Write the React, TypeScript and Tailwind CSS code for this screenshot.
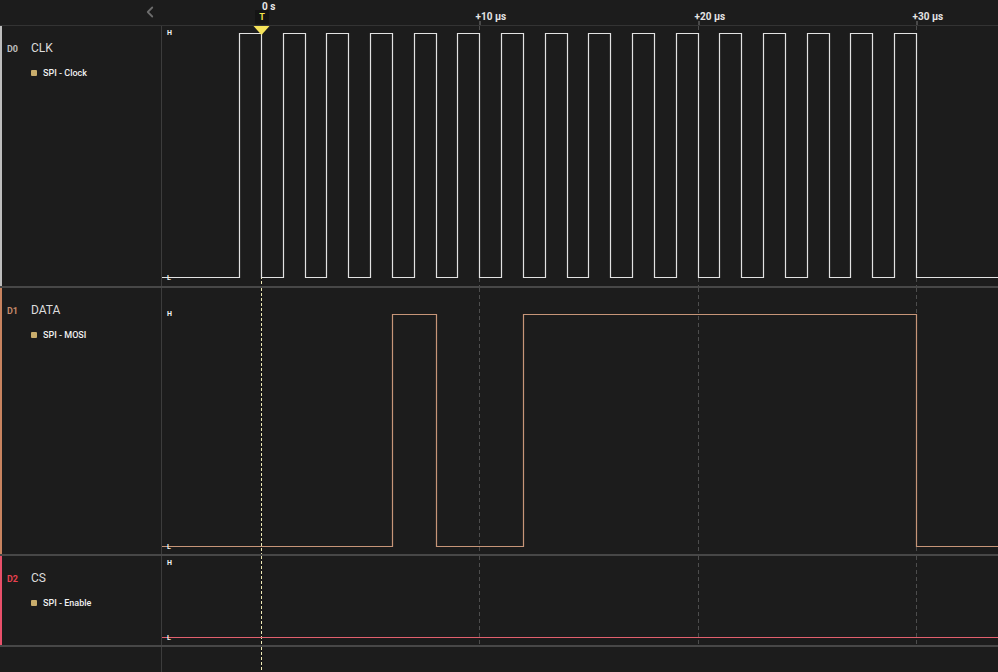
import React from "react";
import { ChevronLeft } from "lucide-react";

const X = (t: number) => Math.round(99 + t * 21.83) + 0.5;
const W = 836;

function clkPath(H: number, L: number) {
  let d = `M 0 ${L}`;
  for (let k = 0; k < 16; k++) {
    const r = X(-1 + 2 * k);
    const f = X(2 * k);
    d += ` L ${r} ${L} L ${r} ${H} L ${f} ${H} L ${f} ${L}`;
  }
  d += ` L ${W} ${L}`;
  return d;
}

function dataPath(H: number, L: number) {
  const segs: [number, number][] = [
    [6, 8],
    [12, 30],
  ];
  let d = `M 0 ${L}`;
  for (const [a, b] of segs) {
    d += ` L ${X(a)} ${L} L ${X(a)} ${H} L ${X(b)} ${H} L ${X(b)} ${L}`;
  }
  d += ` L ${W} ${L}`;
  return d;
}

function Grid({ h, grid = true }: { h: number; grid?: boolean }) {
  return (
    <>
      {grid &&
        [10, 20, 30].map((t) => (
          <line
            key={t}
            x1={X(t)}
            x2={X(t)}
            y1={0}
            y2={h}
            stroke="#4d4d4d"
            strokeWidth={1}
            strokeDasharray="4 3"
          />
        ))}
      <line
        x1={X(0)}
        x2={X(0)}
        y1={0}
        y2={h}
        stroke="#efe9b4"
        strokeWidth={1}
        strokeDasharray="3 2"
      />
    </>
  );
}

function Label({
  id,
  idColor,
  name,
  sub,
  bar,
  h,
}: {
  id: string;
  idColor: string;
  name: string;
  sub: string;
  bar: string;
  h: string;
}) {
  return (
    <div
      className={`w-[162px] shrink-0 border-r border-r-[#3c3c3c] ${h} border-l-2 ${bar} pl-[5px] pt-[14px]`}
    >
      <div className="flex items-baseline">
        <span className={`w-[24px] text-[9px] font-bold ${idColor}`}>{id}</span>
        <span className="text-[12px] leading-[16px] text-[#dcdcdc]">{name}</span>
      </div>
      <div className="mt-[10px] ml-[24px] flex items-center gap-[6px]">
        <span className="h-[6px] w-[6px] rounded-[1px] bg-[#c9ad6c]" />
        <span className="text-[9px] font-medium leading-[12px] text-[#f0f0f0]">{sub}</span>
      </div>
    </div>
  );
}

function HL({ hy, ly }: { hy: number; ly: number }) {
  return (
    <>
      <span
        className="absolute left-[5px] text-[7px] font-bold leading-[8px] text-[#f2f2f2]"
        style={{ top: hy - 4 }}
      >
        H
      </span>
      <span
        className="absolute left-[5px] text-[7px] font-bold leading-[8px] text-[#f2f2f2]"
        style={{ top: ly - 3 }}
      >
        L
      </span>
    </>
  );
}

export default function App() {
  return (
    <div
      className="h-[672px] w-[998px] overflow-hidden bg-[#1c1c1c]"
      style={{ fontFamily: "Roboto, 'Noto Sans', sans-serif" }}
    >
      {/* header */}
      <div className="relative flex h-[26px] border-b border-[#333333] bg-[#1c1c1c]">
        <div className="w-[162px] shrink-0">
          <ChevronLeft size={18} strokeWidth={2.4} className="ml-[141px] mt-[3px] text-[#6c6c6c]" />
        </div>
        <div className="relative flex-1">
          <span className="absolute left-[100px] top-[-1px] text-[10px] font-bold text-[#e8e8e8]">0 s</span>
          <div className="absolute left-[93px] top-[10px] flex h-[14px] w-[14px] items-center justify-center bg-[#141414]">
            <span className="text-[9px] font-bold leading-[10px] text-[#f3e24a]">T</span>
          </div>
          {[
            ["+10 µs", 10],
            ["+20 µs", 20],
            ["+30 µs", 30],
          ].map(([l, t]) => (
            <React.Fragment key={l as string}>
              <span
                className="absolute top-[9px] whitespace-nowrap text-[10px] font-bold text-[#e4e4e4]"
                style={{ left: X(t as number) - 4 }}
              >
                {l}
              </span>
              <span
                className="absolute top-[21px] h-[4px] w-[2px] bg-[#4a4a4a]"
                style={{ left: X(t as number) - 1 }}
              />
            </React.Fragment>
          ))}
        </div>
      </div>

      {/* D0 */}
      <div className="flex border-b-2 border-[#474747]">
        <Label id="D0" idColor="text-[#bdbdbd]" name="CLK" sub="SPI - Clock" bar="border-l-[#bdbdbd]" h="h-[260px]" />
        <div className="relative h-[260px] flex-1">
          <svg width={W} height={260} className="block">
            <Grid h={260} />
            <path d={clkPath(7.5, 251.5)} fill="none" stroke="#e2e2e2" strokeWidth={1.2} />
            <polygon points={`${X(0) - 8},0 ${X(0) + 8},0 ${X(0)},9`} fill="#f5e35a" />
          </svg>
          <HL hy={7} ly={251} />
        </div>
      </div>

      {/* D1 */}
      <div className="flex border-b-2 border-[#474747]">
        <Label id="D1" idColor="text-[#c4896a]" name="DATA" sub="SPI - MOSI" bar="border-l-[#c8835f]" h="h-[266px]" />
        <div className="relative h-[266px] flex-1">
          <svg width={W} height={266} className="block">
            <Grid h={266} />
            <path d={dataPath(26.5, 258.5)} fill="none" stroke="#c69578" strokeWidth={1.2} />
          </svg>
          <HL hy={26} ly={258} />
        </div>
      </div>

      {/* D2 */}
      <div className="flex border-b-2 border-[#474747]">
        <Label id="D2" idColor="text-[#e8414f]" name="CS" sub="SPI - Enable" bar="border-l-[#e8506a]" h="h-[89px]" />
        <div className="relative h-[89px] flex-1">
          <svg width={W} height={89} className="block">
            <Grid h={89} />
            <path d={`M 0 81.5 L ${W} 81.5`} fill="none" stroke="#e2606e" strokeWidth={1.2} />
          </svg>
          <HL hy={7} ly={81} />
        </div>
      </div>

      {/* bottom */}
      <div className="flex h-[25px]">
        <div className="w-[162px] shrink-0 border-r border-r-[#3c3c3c]" />
        <div className="flex-1">
          <svg width={W} height={25} className="block">
            <Grid h={25} grid={false} />
          </svg>
        </div>
      </div>
    </div>
  );
}
